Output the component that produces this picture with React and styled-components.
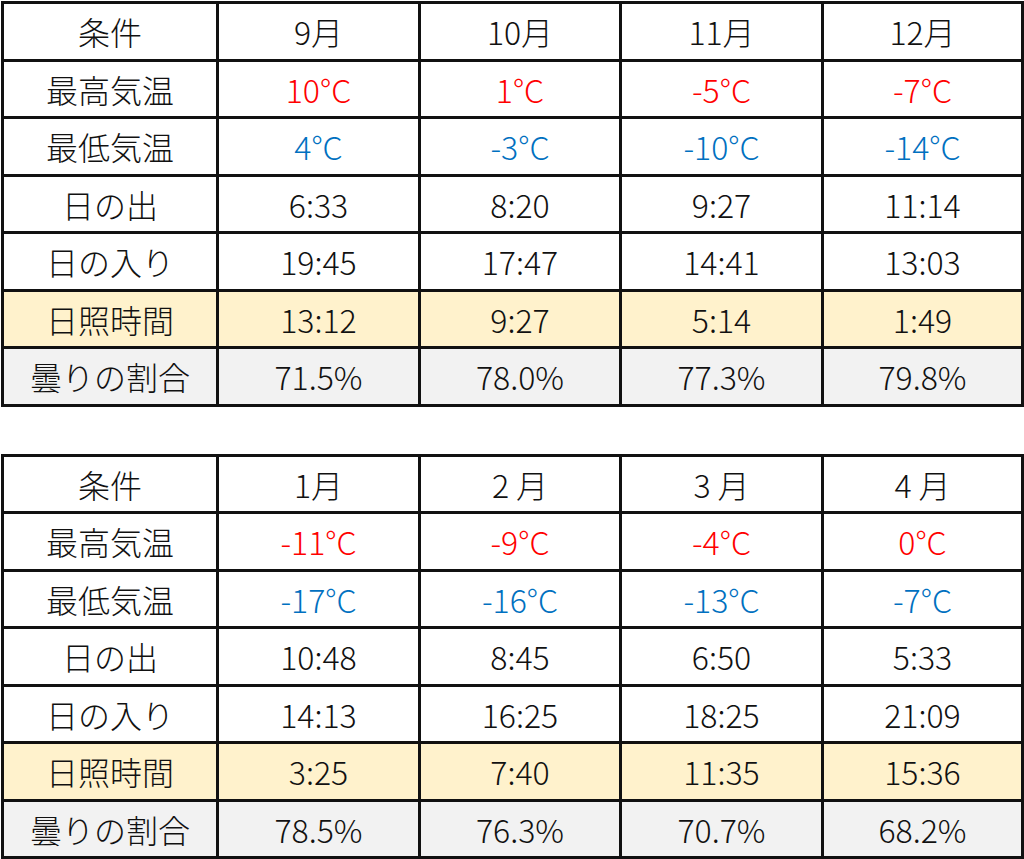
import styled, { createGlobalStyle } from "styled-components";

const GlobalStyle = createGlobalStyle`
    body {
        margin: 0;
        background: #ffffff;
        font-family: "Noto Sans CJK JP", "Noto Sans", sans-serif;
    }
`;

const Page = styled.div`
    display: flex;
    flex-direction: column;
    gap: 47px;
    width: 1024px;
    padding: 1px 0 0 1px;
    box-sizing: border-box;
`;

const Table = styled.table`
    border-collapse: collapse;
    width: 1020px;
    table-layout: fixed;
`;

const Col = styled.col`
    width: ${(p) => p.w}px;
`;

const Row = styled.tr`
    background: ${(p) => (p.tone === "sun" ? "#fff2cc" : p.tone === "cloud" ? "#f2f2f2" : "#ffffff")};
`;

const Cell = styled.td`
    border: 3px solid #111;
    height: 54.5px;
    padding: 0;
    text-align: center;
    font-size: 32px;
    font-weight: 300;
    line-height: 1;
    color: ${(p) => (p.color === "red" ? "#ff0000" : p.color === "blue" ? "#0070c0" : "#111111")};
`;

const tables = [
    {
        months: ["9月", "10月", "11月", "12月"],
        high: ["10°C", "1°C", "-5°C", "-7°C"],
        low: ["4°C", "-3°C", "-10°C", "-14°C"],
        rise: ["6:33", "8:20", "9:27", "11:14"],
        set: ["19:45", "17:47", "14:41", "13:03"],
        sun: ["13:12", "9:27", "5:14", "1:49"],
        cloud: ["71.5%", "78.0%", "77.3%", "79.8%"],
    },
    {
        months: ["1月", "2 月", "3 月", "4 月"],
        high: ["-11°C", "-9°C", "-4°C", "0°C"],
        low: ["-17°C", "-16°C", "-13°C", "-7°C"],
        rise: ["10:48", "8:45", "6:50", "5:33"],
        set: ["14:13", "16:25", "18:25", "21:09"],
        sun: ["3:25", "7:40", "11:35", "15:36"],
        cloud: ["78.5%", "76.3%", "70.7%", "68.2%"],
    },
];

const rows = [
    { key: "months", label: "条件" },
    { key: "high", label: "最高気温", color: "red" },
    { key: "low", label: "最低気温", color: "blue" },
    { key: "rise", label: "日の出" },
    { key: "set", label: "日の入り" },
    { key: "sun", label: "日照時間", tone: "sun" },
    { key: "cloud", label: "曇りの割合", tone: "cloud" },
];

const colWidths = [215, 202, 201, 202, 200];

const WeatherTable = ({ data }) => (
    <Table>
        <colgroup>
            {colWidths.map((w, i) => (
                <Col key={i} w={w} />
            ))}
        </colgroup>
        <tbody>
            {rows.map((r) => (
                <Row key={r.key} tone={r.tone}>
                    <Cell>{r.label}</Cell>
                    {data[r.key].map((v, i) => (
                        <Cell key={i} color={r.color}>{v}</Cell>
                    ))}
                </Row>
            ))}
        </tbody>
    </Table>
);

const App = () => (
    <>
        <GlobalStyle />
        <Page>
            {tables.map((t, i) => (
                <WeatherTable key={i} data={t} />
            ))}
        </Page>
    </>
);

export default App;
